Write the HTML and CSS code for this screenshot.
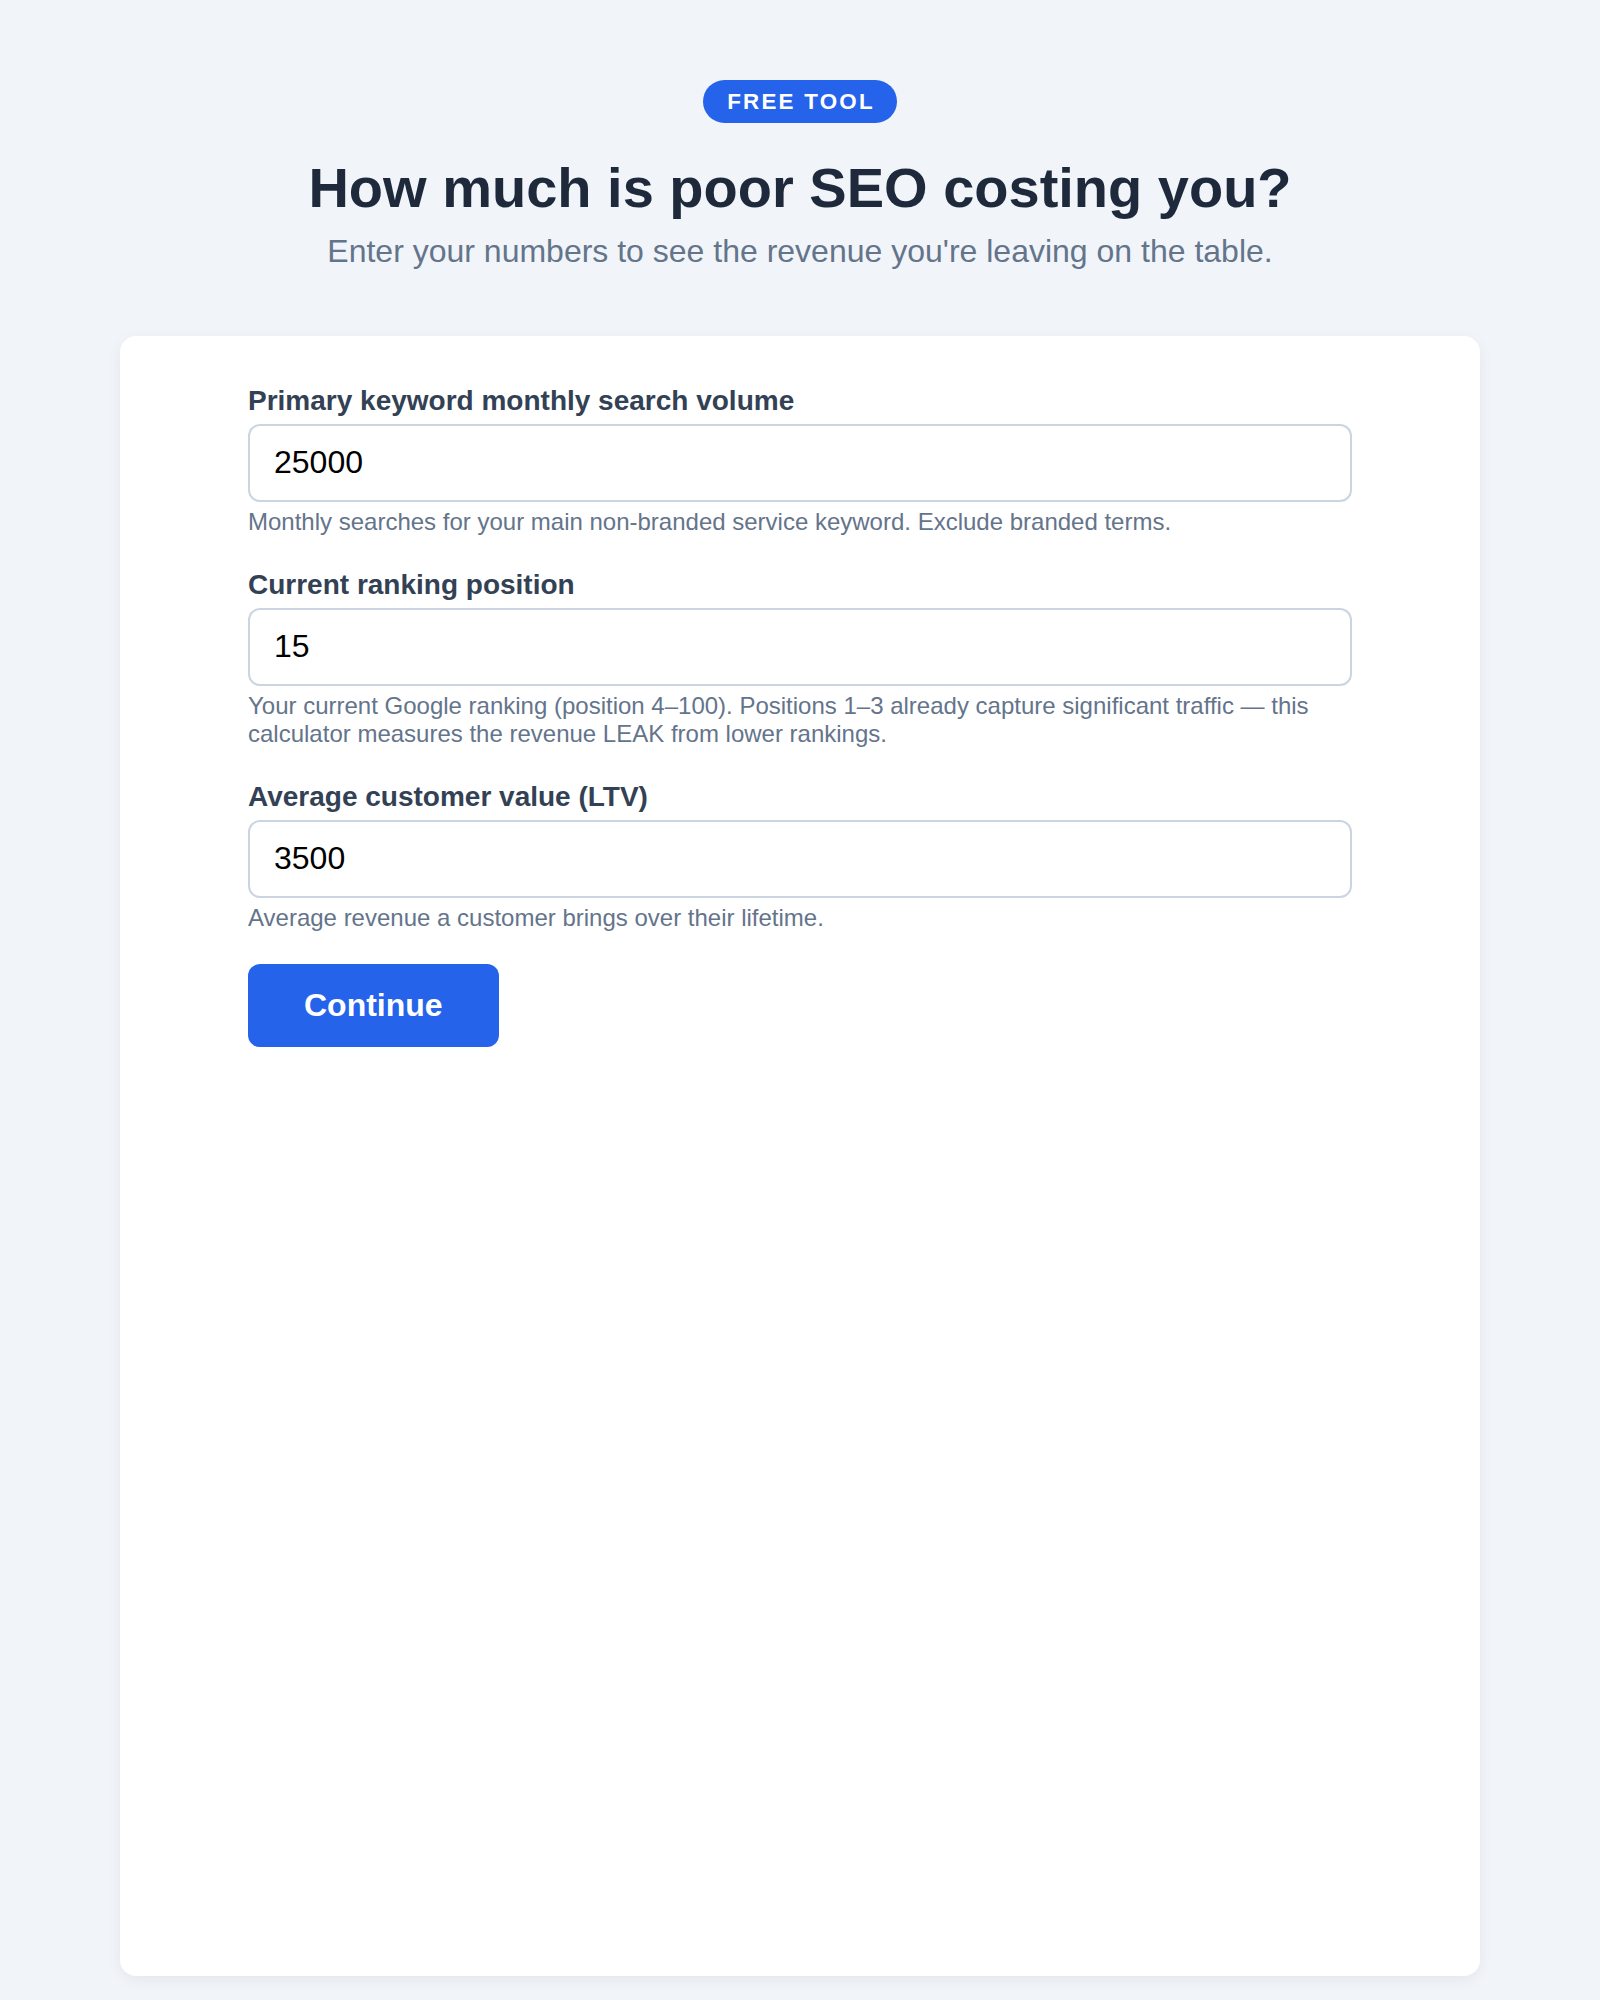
FILE: index.html
```html
<!DOCTYPE html>
<html lang="en">
  <head>
    <meta charset="UTF-8" />
    <meta name="viewport" content="width=device-width, initial-scale=1.0" />
    <title>SEO Revenue Leak Calculator</title>
    <link rel="stylesheet" href="styles.css">
  </head>
  <body>
    <div class="page">
      <header class="hero">
        <span class="badge">FREE TOOL</span>
        <h1>How much is poor SEO costing you?</h1>
        <p>Enter your numbers to see the revenue you're leaving on the table.</p>
      </header>

      <div class="calc-card">
        <form class="calc-form" id="calc-form">
          <div class="form-group">
            <label for="volume">Primary keyword monthly search volume</label>
            <input type="number" id="volume" name="volume" value="25000" />
            <p class="hint">Monthly searches for your main non-branded service keyword. Exclude branded terms.</p>
          </div>

          <div class="form-group">
            <label for="position">Current ranking position</label>
            <input type="number" id="position" name="position" value="15" />
            <p class="hint">Your current Google ranking (position 4&ndash;100). Positions 1&ndash;3 already capture significant traffic &mdash; this calculator measures the revenue LEAK from lower rankings.</p>
          </div>

          <div class="form-group">
            <label for="ltv">Average customer value (LTV)</label>
            <input type="number" id="ltv" name="ltv" value="3500" />
            <p class="hint">Average revenue a customer brings over their lifetime.</p>
          </div>

          <button type="submit" class="continue-button">Continue</button>
        </form>
      </div>
    </div>
  </body>
</html>
```

FILE: styles.css
```css
* {
  margin: 0;
  padding: 0;
  box-sizing: border-box;
  font-family: "Liberation Sans", Arial, Helvetica, sans-serif;
}

body {
  background: #f1f5f9;
  color: #1e293b;
}

.page {
  min-height: 100vh;
  display: flex;
  flex-direction: column;
  padding: 80px 120px 24px;
}

.hero {
  text-align: center;
  margin-bottom: 64px;
}

.badge {
  display: inline-block;
  background: #2563eb;
  color: #fff;
  font-size: 22.4px;
  font-weight: 700;
  letter-spacing: 2.2px;
  line-height: 27px;
  padding: 8px 22px 8px 24px;
  border-radius: 999px;
  margin-bottom: 31px;
}

.hero h1 {
  font-size: 56px;
  line-height: 67px;
  font-weight: 700;
  color: #1e293b;
  margin-bottom: 9px;
}

.hero p {
  font-size: 32px;
  line-height: 42px;
  color: #64748b;
}

.calc-card {
  flex: 1;
  background: #fff;
  border-radius: 16px;
  box-shadow: 0 4px 14px rgba(15, 23, 42, 0.06);
  padding: 47px 48px;
}

.calc-form {
  max-width: 1104px;
  margin: 0 auto;
}

.form-group {
  margin-bottom: 31px;
}

.form-group label {
  display: block;
  font-size: 28px;
  line-height: 36px;
  font-weight: 700;
  color: #334155;
  margin-bottom: 5px;
}

.form-group input {
  width: 100%;
  font-size: 32px;
  line-height: 38px;
  padding: 17px 24px 19px;
  border: 2px solid #cbd5e1;
  border-radius: 12px;
  color: #000;
  background: #fff;
  outline: none;
  -moz-appearance: textfield;
}

.form-group input::-webkit-outer-spin-button,
.form-group input::-webkit-inner-spin-button {
  -webkit-appearance: none;
  margin: 0;
}

.hint {
  font-size: 24px;
  line-height: 28px;
  color: #64748b;
  margin-top: 6px;
}

.continue-button {
  display: inline-block;
  margin-top: 1px;
  background: #2563eb;
  color: #fff;
  border: none;
  border-radius: 12px;
  font-size: 32px;
  line-height: 39px;
  font-weight: 700;
  padding: 22px 56px;
  cursor: pointer;
}
```
